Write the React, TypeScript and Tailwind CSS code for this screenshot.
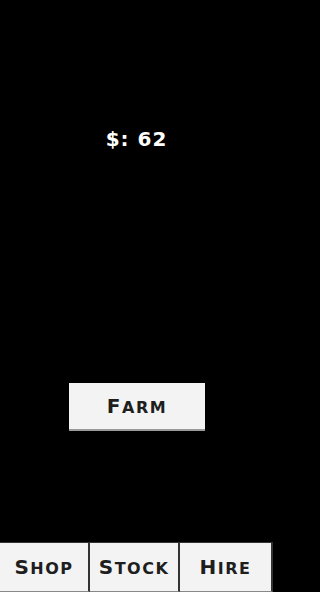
import React from 'react';

const font = { fontFamily: '"DejaVu Sans", "Liberation Sans", sans-serif' };

// Copperplate-like caps: big first letter, smaller uppercase rest
const Caps = ({ text }: { text: string }) => (
    <span className="font-bold text-[#1e1e1e] tracking-[1.5px]">
        <span className="text-[20px]">{text[0]}</span>
        <span className="text-[16px] uppercase">{text.slice(1)}</span>
    </span>
);

const App = () => {
    const tabs = ['Shop', 'Stock', 'Hire'];
    return (
        <div className="min-h-screen w-full bg-black" style={font}>
            <div className="h-screen w-[273px] flex flex-col">
                <div className="flex-1 flex flex-col items-center">
                    <p className="mt-[125px] text-white text-[20px] font-bold tracking-[1px] leading-[28px]">$: 62</p>
                    <button className="mt-auto mb-[111px] w-[136px] h-[48px] bg-[#f3f3f3] border-b-2 border-[#9a9a9a] ml-[1px] leading-none">
                        <Caps text="Farm" />
                    </button>
                </div>
                {/* Bottom nav */}
                <div className="grid grid-cols-[90px_90px_1fr] h-[50px] border-t border-[#333]">
                    {tabs.map((t) => (
                        <button
                            key={t}
                            className="bg-[#f3f3f3] border-r-2 border-[#333] border-b border-b-[#888] leading-none"
                        >
                            <Caps text={t} />
                        </button>
                    ))}
                </div>
            </div>
        </div>
    );
};

export default App;
